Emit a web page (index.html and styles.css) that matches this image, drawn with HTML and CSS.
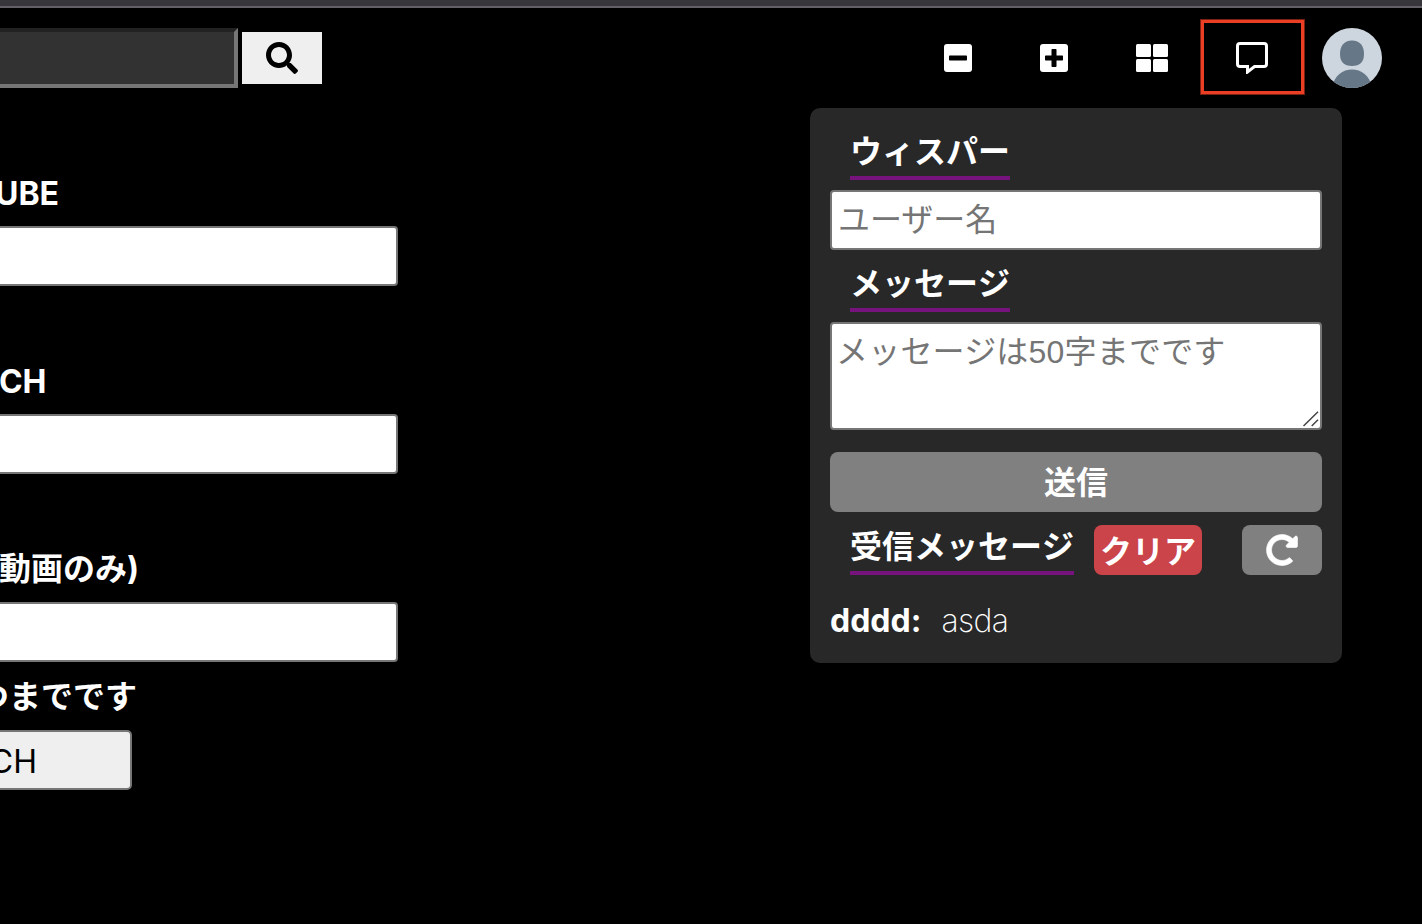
FILE: index.html
```html
<!DOCTYPE html>
<html lang="ja">
<head>
<meta charset="utf-8">
<title>ウィスパー</title>
<link rel="stylesheet" href="styles.css">
</head>
<body>
<div class="strip"></div>
<header class="header">
  <form class="search">
    <input class="search-input" type="text">
    <button class="search-btn" type="button"><svg width="32" height="32" viewBox="0 0 512 512"><path d="M505 442.7L405.3 343c-4.5-4.5-10.6-7-17-7H372c27.6-35.3 44-79.7 44-128C416 93.1 322.9 0 208 0S0 93.1 0 208s93.1 208 208 208c48.3 0 92.7-16.4 128-44v16.3c0 6.4 2.5 12.5 7 17l99.7 99.7c9.4 9.4 24.6 9.4 33.9 0l28.3-28.3c9.4-9.4 9.4-24.6.1-34zM208 336c-70.7 0-128-57.2-128-128 0-70.7 57.2-128 128-128 70.7 0 128 57.2 128 128 0 70.7-57.2 128-128 128z"/></svg></button>
  </form>
  <nav class="nav">
    <svg class="minus" width="28" height="28" viewBox="0 0 28 28"><rect width="28" height="28" rx="3" fill="#fff"/><rect x="5" y="11.5" width="18" height="5" rx=".8"/></svg>
    <svg class="plus" width="28" height="28" viewBox="0 0 28 28"><rect width="28" height="28" rx="3" fill="#fff"/><path d="M5.7 11.5h5.8V5.7q0-.7.7-.7h3.6q.7 0 .7.7v5.8h5.8q.7 0 .7.7v3.6q0 .7-.7.7h-5.8v5.8q0 .7-.7.7h-3.6q-.7 0-.7-.7v-5.8H5.7q-.7 0-.7-.7v-3.6q0-.7.7-.7z"/></svg>
    <svg class="grid" width="32" height="28" viewBox="0 0 32 28" fill="#fff"><rect width="15" height="13" rx="1.5"/><rect x="17" width="15" height="13" rx="1.5"/><rect y="15" width="15" height="13" rx="1.5"/><rect x="17" y="15" width="15" height="13" rx="1.5"/></svg>
    <span class="whisper"><svg width="32" height="32" viewBox="0 0 32 32" fill="none" stroke="#fff" stroke-width="3"><path d="M4 1.500H28Q30.500 1.500 30.500 4V22Q30.500 24.500 28 24.500H18.500L11.500 30V24.500H4Q1.500 24.500 1.500 22V4Q1.500 1.500 4 1.500Z"/></svg></span>
    <svg class="avatar" width="60" height="60" viewBox="0 0 60 60"><defs><clipPath id="round"><circle cx="30" cy="30" r="30"/></clipPath></defs><g clip-path="url(#round)"><rect width="60" height="60" fill="#cdd6df"/><path d="M30 12.500C38 12.500 42 18 42 26C42 34 38 38 30 38C22 38 18 34 18 26C18 18 22 12.500 30 12.500Z" fill="#667887"/><path d="M10 60C12 47 21 41.500 30 41.500S48 47 50 60Z" fill="#667887"/></g></svg>
  </nav>
</header>
<div class="columns">
  <main class="channels">
    <div class="field"><label class="label to-ube">UBE</label><input class="box" type="text"></div>
    <div class="field"><label class="label to-ch">CH</label><input class="box" type="text"></div>
    <div class="field last"><label class="label to-movie">動画のみ)</label><input class="box" type="text"></div>
    <p class="label note">つまでです</p>
    <button class="submit" type="button">CH</button>
  </main>
  <aside class="panel">
    <h2 class="title">ウィスパー</h2>
    <input class="box user" type="text" placeholder="ユーザー名">
    <h2 class="title second">メッセージ</h2>
    <div class="area"><textarea class="box message" placeholder="メッセージは50字までです"></textarea><svg class="grip" width="16" height="16" viewBox="0 0 16 16" stroke="#444" stroke-width="1.500"><path d="M.5 15L15 .8M8.700 15L15 8.800"/></svg></div>
    <button class="send" type="button">送信</button>
    <div class="inbox">
      <h2 class="title">受信メッセージ</h2>
      <button class="clear" type="button">クリア</button>
      <button class="reload" type="button"><svg width="32" height="32" viewBox="0 0 512 512" fill="#fff" stroke="#fff" stroke-width="10"><path d="M256.455 8c66.269.119 126.437 26.233 170.859 68.685l35.715-35.715C478.149 25.851 504 36.559 504 57.941V192c0 13.255-10.745 24-24 24H345.941c-21.382 0-32.09-25.851-16.971-40.971l41.750-41.750c-30.864-28.899-70.801-44.907-113.230-45.273-92.398-.798-170.283 73.977-169.484 169.442C88.764 348.009 162.184 424 256 424c41.127 0 79.997-14.678 110.629-41.556 4.743-4.161 11.906-3.908 16.368.553l39.662 39.662c4.872 4.872 4.631 12.815-.482 17.433C378.202 479.813 319.926 504 256 504 119.034 504 8.001 392.967 8 256.002 7.999 119.193 119.646 7.755 256.455 8z"/></svg></button>
    </div>
    <p class="entry"><b>dddd:</b><span>asda</span></p>
  </aside>
</div>
</body>
</html>
```
FILE: styles.css
```css
*, *::after { box-sizing: border-box; margin: 0; }
body {
  height: 924px;
  overflow: hidden;
  background: #000;
  color: #fff;
  font: 32px/40px Inter, "Noto Sans CJK JP", sans-serif;
}
svg { display: block; flex: none; }
.strip { height: 8px; background: #36363b; border-bottom: 2px solid #636167; }
.header { display: flex; justify-content: space-between; height: 100px; padding: 20px 40px 20px 0; }
.search { display: flex; align-items: center; gap: 4px; }
.search-input { width: 238px; height: 60px; border: 4px solid; border-color: #222 #767676 #767676 #222; border-left: 0; background: #323232; }
.search-btn { display: flex; align-items: center; width: 80px; height: 52px; padding: 0 0 0 23.5px; border: 0; background: #efefef; }
.nav { display: flex; align-items: center; }
.plus { margin-left: 68px; }
.grid { margin-left: 68px; }
.whisper { position: relative; margin-left: 68px; }
.whisper::after {
  content: "";
  position: absolute;
  left: -36px;
  top: -23px;
  width: 105px;
  height: 76px;
  border: 4px solid #ea3f24;
  outline: 1px solid #7a2113;
  outline-offset: -1px;
}
.avatar { margin-left: 54px; }
.columns { display: flex; justify-content: space-between; align-items: flex-start; padding-right: 80px; }
.channels { width: 398px; padding-top: 65px; }
.field { height: 188px; }
.field.last { height: 128px; }
.label { display: flex; justify-content: flex-end; height: 53px; padding-top: 1px; font-weight: 700; white-space: nowrap; }
.to-ube { width: 59px; }
.to-ch { width: 46.5px; }
.to-movie { width: 139px; padding-top: 0; }
.note { width: 137px; height: 57px; margin-top: -4px; padding-top: 4px; }
.box {
  display: block;
  width: 100%;
  height: 60px;
  padding: 0 6px;
  border: 2px solid #767676;
  border-radius: 4px;
  background: #fff;
  font: 32px/40px "Liberation Sans", "Noto Sans CJK JP", sans-serif;
}
.channels .box { border-left: 0; border-radius: 0 4px 4px 0; }
.box::placeholder { color: #757575; opacity: 1; }
.submit {
  display: flex;
  justify-content: flex-end;
  align-items: center;
  width: 132px;
  height: 60px;
  padding: 3px 93px 0 0;
  border: 2px solid #767676;
  border-left: 0;
  border-radius: 0 5px 5px 0;
  background: #efefef;
  color: #000;
  font: 32px/40px Inter, sans-serif;
}
.panel { width: 532px; height: 555px; padding: 20px; border-radius: 10px; background: #282828; }
.title {
  width: fit-content;
  height: 52px;
  margin-left: 20px;
  padding-top: 4px;
  border-bottom: 4px solid #77137c;
  font-size: 32px;
  font-weight: 700;
  line-height: 40px;
  font-kerning: none;
}
.user { margin-top: 10px; padding-top: 1px; }
.title.second { margin-top: 10px; }
.area { position: relative; margin-top: 10px; }
.message { height: 108px; padding: 8px 4px; resize: none; letter-spacing: .2px; }
.grip { position: absolute; right: 3px; bottom: 3px; }
.send, .clear, .reload { border: 0; border-radius: 8px; background: #808080; color: #fff; font: 700 32px/40px Inter, "Noto Sans CJK JP", sans-serif; }
.send { display: block; width: 100%; height: 60px; margin-top: 22px; padding: 2px 0 0; }
.inbox { display: flex; align-items: flex-end; margin-top: 11px; }
.clear { width: 108px; height: 50px; margin-left: 20px; padding: 3px 0 0; background: #cb444a; }
.reload { display: flex; justify-content: center; align-items: center; width: 80px; height: 50px; margin-left: auto; padding: 0; }
.entry { display: flex; gap: 20px; margin-top: 25px; padding-top: 1px; }
.entry span { font-weight: 200; letter-spacing: -.6px; }
```
